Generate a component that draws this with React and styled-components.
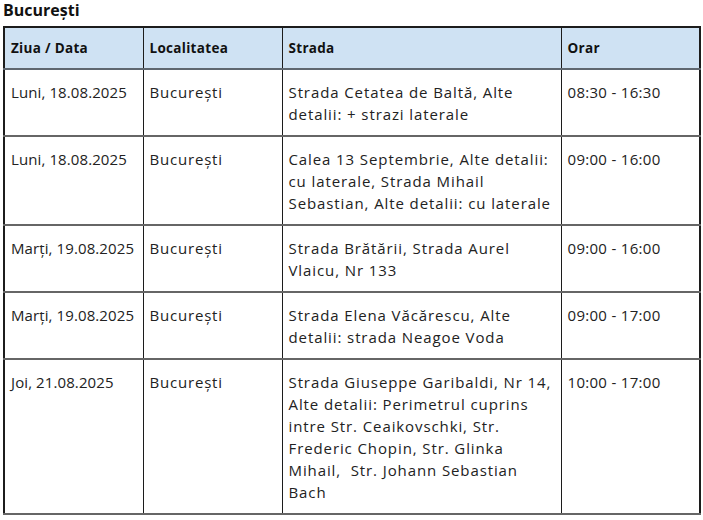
import React from "react";
import styled, { createGlobalStyle } from "styled-components";

const rows = [
  {
    day: "Luni, 18.08.2025",
    place: "București",
    street: "Strada Cetatea de Baltă, Alte detalii: + strazi laterale",
    hours: "08:30 - 16:30",
  },
  {
    day: "Luni, 18.08.2025",
    place: "București",
    street:
      "Calea 13 Septembrie, Alte detalii: cu laterale, Strada Mihail Sebastian, Alte detalii: cu laterale",
    hours: "09:00 - 16:00",
  },
  {
    day: "Marți, 19.08.2025",
    place: "București",
    street: "Strada Brătării, Strada Aurel Vlaicu, Nr 133",
    hours: "09:00 - 16:00",
  },
  {
    day: "Marți, 19.08.2025",
    place: "București",
    street: "Strada Elena Văcărescu, Alte detalii: strada Neagoe Voda",
    hours: "09:00 - 17:00",
  },
  {
    day: "Joi, 21.08.2025",
    place: "București",
    street:
      "Strada Giuseppe Garibaldi, Nr 14, Alte detalii: Perimetrul cuprins intre Str. Ceaikovschki, Str. Frederic Chopin, Str. Glinka Mihail,  Str. Johann Sebastian Bach",
    hours: "10:00 - 17:00",
  },
];

function App() {
  return (
    <Page>
      <GlobalStyle />
      <Title>București</Title>
      <Table>
        <colgroup>
          <col style={{ width: 139 }} />
          <col style={{ width: 139 }} />
          <col style={{ width: 279 }} />
          <col style={{ width: 139 }} />
        </colgroup>
        <thead>
          <tr>
            <Th>Ziua / Data</Th>
            <Th>Localitatea</Th>
            <Th>Strada</Th>
            <Th>Orar</Th>
          </tr>
        </thead>
        <tbody>
          {rows.map((r, i) => (
            <Row key={i}>
              <Td $spacing={0.1}>{r.day}</Td>
              <Td $spacing={0.8}>{r.place}</Td>
              <Td $spacing={0.9} $pre>
                {r.street}
              </Td>
              <Td $spacing={0.3}>{r.hours}</Td>
            </Row>
          ))}
        </tbody>
      </Table>
    </Page>
  );
}

const GlobalStyle = createGlobalStyle`
  body {
    margin: 0;
    background: #ffffff;
    font-family: "Open Sans", "Liberation Sans", sans-serif;
    color: #1a1a1a;
  }
`;

const Page = styled.div`
  padding: 0 3px;
  width: 703px;
  box-sizing: border-box;
`;

const Title = styled.h2`
  margin: 0;
  height: 26px;
  font-size: 16px;
  line-height: 20px;
  font-weight: 700;
  color: #111;
`;

const Table = styled.table`
  width: 697px;
  table-layout: fixed;
  border-collapse: collapse;
  border: 2px solid #1c1c1c;
  font-size: 15px;
  line-height: 22px;
`;

const Th = styled.th`
  background: #cfe2f3;
  text-align: left;
  font-weight: 700;
  font-size: 13.5px;
  letter-spacing: 0.3px;
  height: 40px;
  padding: 0 5px 0 6px;
  border-left: 1px solid #1c1c1c;
  border-bottom: 2px solid #5f6770;
  color: #111;
`;

const Row = styled.tr`
  border-bottom: 2px solid #666;
`;

const Td = styled.td`
  vertical-align: top;
  padding: 11px 4px 10px 6px;
  border-left: 1px solid #1c1c1c;
  letter-spacing: ${(p) => p.$spacing}px;
  white-space: ${(p) => (p.$pre ? "pre-wrap" : "normal")};
  color: #222;
`;

export default App;
